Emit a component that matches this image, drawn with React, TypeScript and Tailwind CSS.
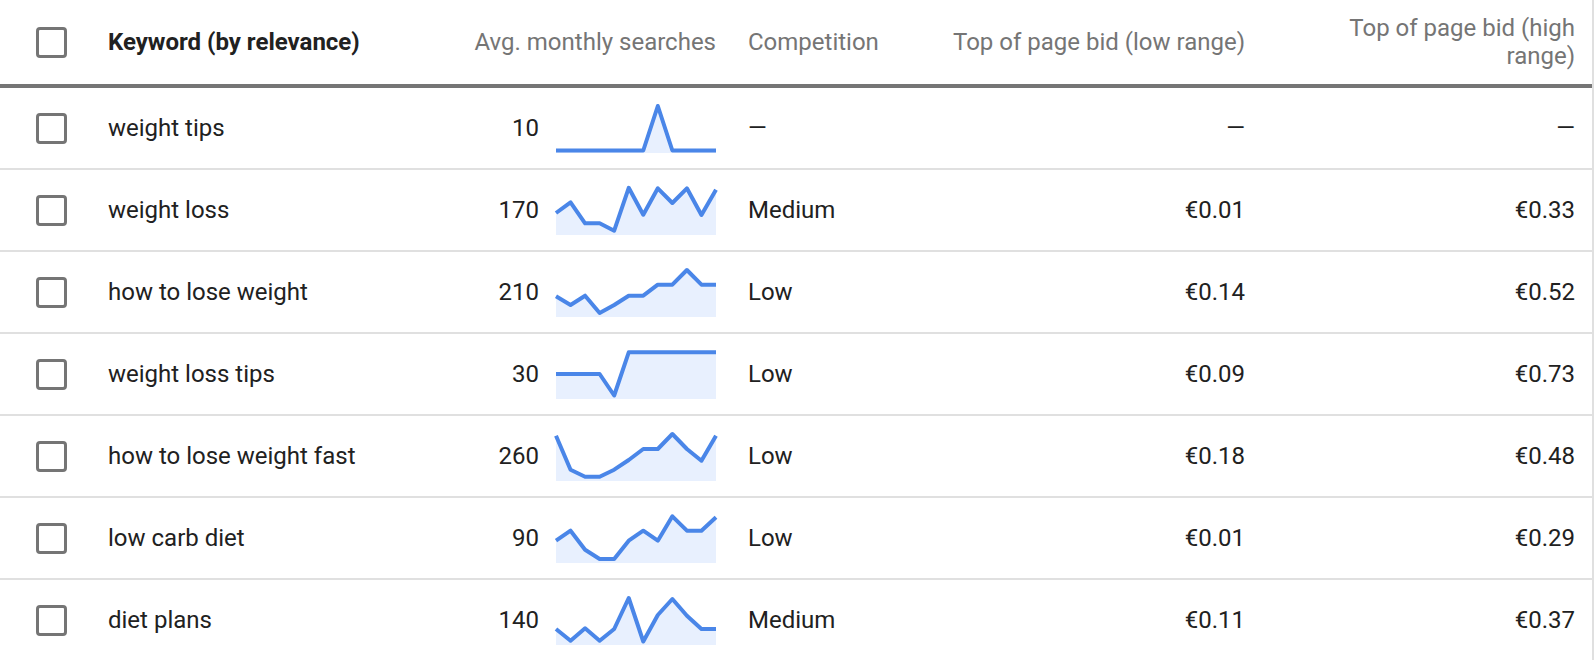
import React from "react";

type Row = {
  kw: string;
  n: string;
  comp: string;
  low: string;
  high: string;
  pts: number[];
};

const rows: Row[] = [
  { kw: "weight tips", n: "10", comp: "—", low: "—", high: "—", pts: [47.5, 47.5, 47.5, 47.5, 47.5, 47.5, 47.5, 3, 47.5, 47.5, 47.5, 47.5] },
  { kw: "weight loss", n: "170", comp: "Medium", low: "€0.01", high: "€0.33", pts: [28, 17.3, 38.3, 38.3, 45.7, 2.8, 29.7, 3.3, 18, 3.3, 30, 4.7] },
  { kw: "how to lose weight", n: "210", comp: "Low", low: "€0.14", high: "€0.52", pts: [29.3, 38, 28.7, 46, 38, 28.7, 28.7, 17.7, 17.7, 3, 17.7, 17.7] },
  { kw: "weight loss tips", n: "30", comp: "Low", low: "€0.09", high: "€0.73", pts: [25, 25, 25, 25, 46.5, 3.3, 3.3, 3.3, 3.3, 3.3, 3.3, 3.3] },
  { kw: "how to lose weight fast", n: "260", comp: "Low", low: "€0.18", high: "€0.48", pts: [4.7, 38.7, 45.7, 45.7, 38.7, 29, 18, 18, 3, 18, 29.7, 4.7] },
  { kw: "low carb diet", n: "90", comp: "Low", low: "€0.01", high: "€0.29", pts: [27.7, 17.7, 36.7, 46, 46, 27.7, 17.7, 27.7, 3.3, 17.7, 17.7, 4.3] },
  { kw: "diet plans", n: "140", comp: "Medium", low: "€0.11", high: "€0.37", pts: [34, 45.7, 33.3, 45.7, 34, 3, 46.5, 20, 4, 20.7, 34, 34] },
];

function Spark({ pts }: { pts: number[] }) {
  const step = 160 / (pts.length - 1);
  const coords = pts.map((y, i) => `${(i * step).toFixed(2)},${y}`);
  const line = coords.join(" ");
  const area = `M0,50 L${coords.join(" L")} L160,50 Z`;
  return (
    <svg width="160" height="50" viewBox="0 0 160 50" className="block overflow-visible">
      <path d={area} fill="#e8f0fe" />
      <polyline points={line} fill="none" stroke="#4a86e8" strokeWidth="4" strokeLinejoin="round" />
    </svg>
  );
}

function Checkbox() {
  return <div className="h-[31px] w-[31px] shrink-0 rounded-[4px] border-[3px] border-[#757575] bg-white" />;
}

export default function App() {
  return (
    <div className="w-[1594px] border-r-2 border-[#e0e0e0] bg-white font-[Roboto,sans-serif] text-[24px] text-[#212121]">
      <div className="flex h-[88px] items-center border-b-4 border-[#757575] pl-[36px]">
        <Checkbox />
        <div className="ml-[41px] w-[331px] shrink-0 font-bold text-[#212121]">Keyword (by relevance)</div>
        <div className="w-[277px] shrink-0 text-right text-[#757575]">Avg. monthly searches</div>
        <div className="ml-[32px] w-[200px] shrink-0 text-[#757575]">Competition</div>
        <div className="w-[297px] shrink-0 text-right text-[#757575]">Top of page bid (low range)</div>
        <div className="flex w-[330px] shrink-0 justify-end">
          <div className="w-[232px] text-right leading-[28px] text-[#757575]">Top of page bid (high range)</div>
        </div>
      </div>
      {rows.map((r) => (
        <div key={r.kw} className="flex h-[82px] items-center border-b-2 border-[#e0e0e0] pl-[36px]">
          <Checkbox />
          <div className="ml-[41px] w-[331px] shrink-0">{r.kw}</div>
          <div className="w-[100px] shrink-0 text-right">{r.n}</div>
          <div className="ml-[17px] w-[160px] shrink-0">
            <Spark pts={r.pts} />
          </div>
          <div className="ml-[32px] w-[200px] shrink-0">{r.comp}</div>
          <div className="w-[297px] shrink-0 text-right">{r.low}</div>
          <div className="w-[330px] shrink-0 text-right">{r.high}</div>
        </div>
      ))}
    </div>
  );
}
